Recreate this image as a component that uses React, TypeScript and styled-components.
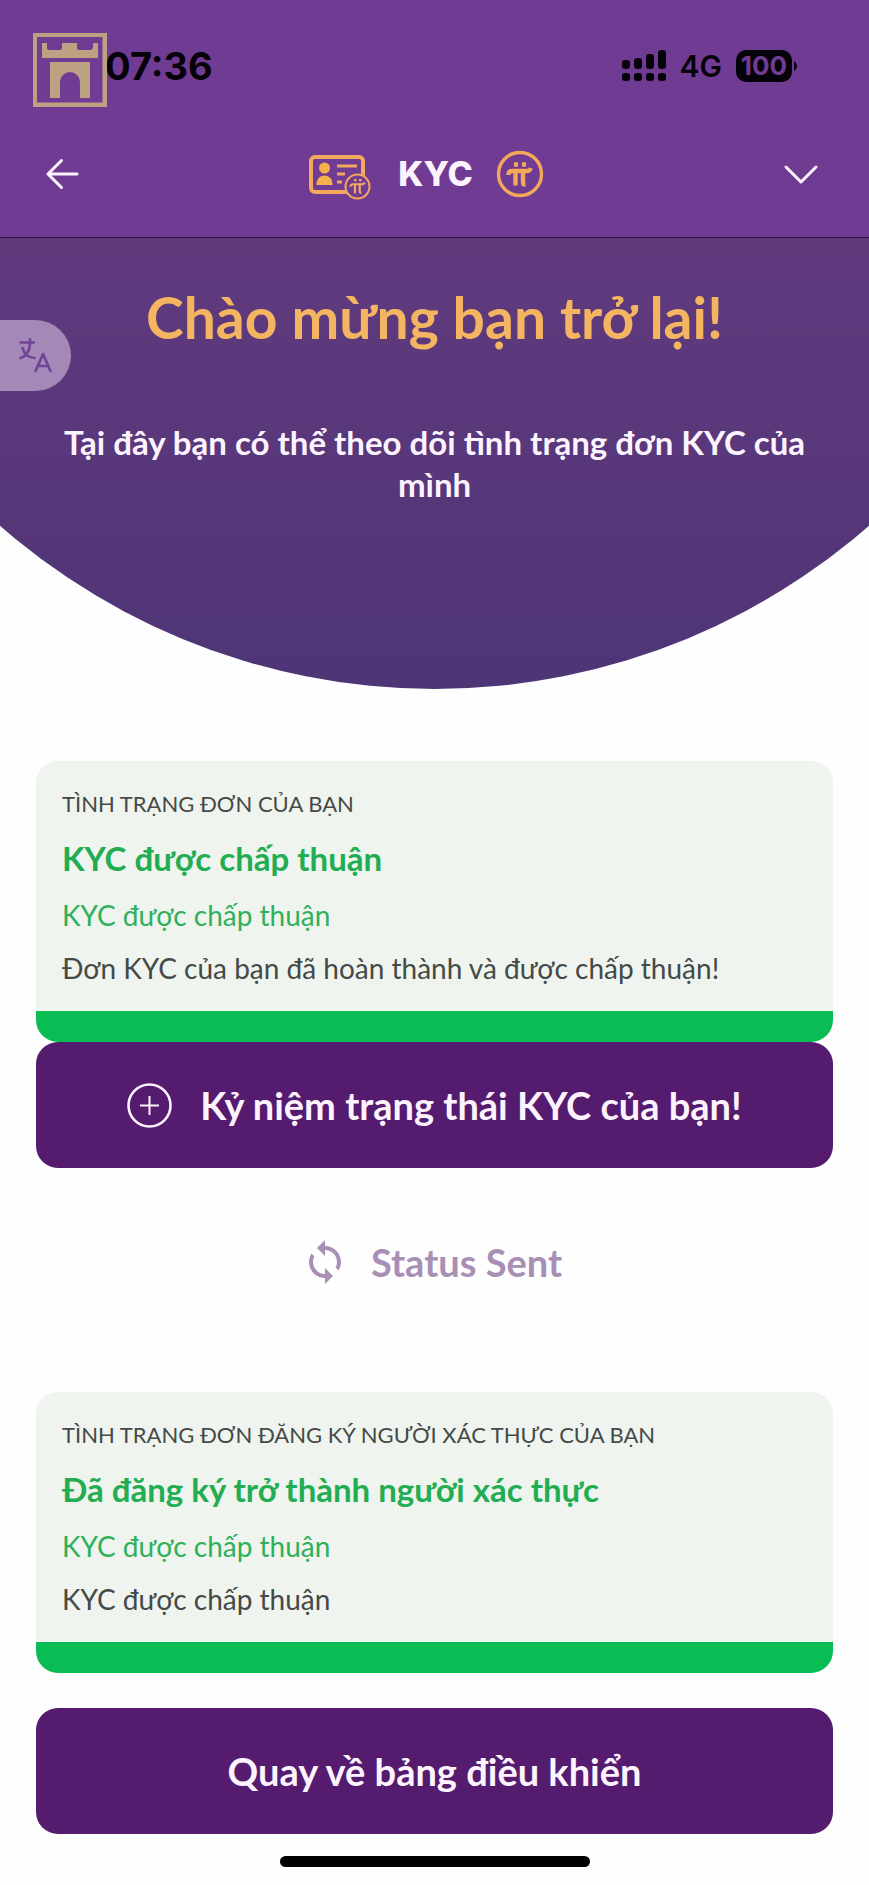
import React from 'react';
import styled, { createGlobalStyle } from 'styled-components';

const GlobalStyle = createGlobalStyle`
  *, *::before, *::after { box-sizing: border-box; }
  body {
    margin: 0;
    background: #fefefe;
    font-family: Lato, "Open Sans", sans-serif;
    color: #444a47;
  }
  h1, h2, p { margin: 0; }
  button { font: inherit; border: 0; cursor: pointer; }
  svg { display: block; flex: none; }
`;

const Page = styled.div`
  display: flex;
  flex-direction: column;
  min-height: 100vh;
`;

const Top = styled.header`
  background: #703b92;
  border-bottom: 1px solid #2b1240;
  font-family: Inter, sans-serif;
`;

const StatusBar = styled.div`
  display: flex;
  align-items: center;
  justify-content: space-between;
  height: 131px;
  padding: 0 72px 0 105px;
`;

const LogoBadge = styled.div`
  position: absolute;
  top: 33px;
  left: 33px;
`;

const StatusGroup = styled.div`
  display: flex;
  align-items: center;
  gap: 14px;
  color: #06020a;
`;

const Clock = styled.time`
  color: #06020a;
  font-size: 38px;
  line-height: 44px;
  font-weight: 700;
`;

const Network = styled.span`
  font-size: 30px;
  line-height: 36px;
  font-weight: 600;
`;

const Battery = styled.span`
  display: flex;
  align-items: center;
`;

const BatteryLevel = styled.span`
  width: 56px;
  border-radius: 10px;
  background: #06020a;
  color: #703b92;
  font-size: 26px;
  line-height: 32px;
  font-weight: 700;
  text-align: center;
`;

const NavBar = styled.nav`
  display: flex;
  align-items: center;
  justify-content: space-between;
  height: 106px;
  padding: 0 48px 20px 44px;
`;

const IconButton = styled.button`
  display: flex;
  padding: 0;
  background: none;
  color: #fdf3ff;
`;

const NavTitle = styled.div`
  display: flex;
  align-items: center;
  gap: 23px;
  margin-right: 12px;
  color: #fdf3ff;
  font-size: 34px;
  line-height: 44px;
  font-weight: 800;
`;

const Hero = styled.section`
  display: flex;
  flex-direction: column;
  align-items: center;
  gap: 70px;
  padding: 45px 48px 184px;
  background: linear-gradient(#613a7e, #4e3576);
  clip-path: ellipse(76% 661px at 50% calc(100% - 661px));
  text-align: center;
`;

const Welcome = styled.h1`
  color: #f3b562;
  font-size: 57px;
  line-height: 68px;
  font-weight: 700;
`;

const Intro = styled.p`
  max-width: 760px;
  color: #fdf3ff;
  font-size: 33px;
  line-height: 42px;
  font-weight: 700;
`;

const TranslateTab = styled.button`
  position: absolute;
  top: 320px;
  left: 0;
  display: flex;
  align-items: center;
  width: 71px;
  height: 71px;
  padding: 0 0 0 18px;
  border-radius: 0 36px 36px 0;
  background: #a388b8;
  color: #714394;
`;

const Content = styled.main`
  display: flex;
  flex-direction: column;
  padding: 72px 36px 18px;
`;

const Card = styled.section`
  display: flex;
  flex-direction: column;
  padding: 24px 26px 16px;
  border-bottom: 31px solid #09bc54;
  border-radius: 22px;
  background: #eff4ee;
`;

const CardLabel = styled.p`
  font-size: 22px;
  line-height: 38px;
`;

const CardTitle = styled.h2`
  margin: 7px 0 3px;
  color: #22ad52;
  font-size: 33px;
  line-height: 56px;
  font-weight: 700;
`;

const CardText = styled.p<{ $accent?: boolean }>`
  color: ${(p) => (p.$accent ? '#2fb05b' : '#444a47')};
  font-size: 28px;
  line-height: 53px;
`;

const Button = styled.button`
  display: flex;
  align-items: center;
  justify-content: center;
  gap: 28px;
  min-height: 126px;
  border-radius: 22px;
  background: #541b6e;
  color: #fdf3ff;
  font-size: 38px;
  line-height: 44px;
  font-weight: 700;
`;

const SentStatus = styled.p`
  display: flex;
  align-items: center;
  justify-content: center;
  gap: 22px;
  height: 224px;
  padding: 0 6px 36px 0;
  color: #a88fb5;
  font-size: 38px;
  line-height: 44px;
  font-weight: 700;
`;

const Spacer = styled.div`
  height: 35px;
`;

const HomeBar = styled.div`
  align-self: center;
  width: 310px;
  max-width: 50%;
  height: 11px;
  margin: 4px 0 18px;
  border-radius: 6px;
  background: #000;
`;

const CastleLogo = () => (
  <svg width="74" height="74" viewBox="0 0 74 74" fill="#bda183">
    <path fillRule="evenodd" d="M0 0H74V74H0Z M4 4V69.500H69.500V4Z" />
    <path d="M9 10H14V15Q14 17 16 17H27Q29 17 29 15V10H44V15Q44 17 46 17H57Q60 17 60 14V10H65V25H9Z" />
    <path d="M17 29H57V65H47V49A10 10 0 0 0 27 49V65H17Z" />
  </svg>
);

const SignalIcon = () => (
  <svg width="44" height="32" viewBox="0 0 44 32" fill="currentColor">
    {[10, 8, 4, 0].map((y, i) => (
      <React.Fragment key={y}>
        <rect x={i * 12} y={y} width="8" height={19 - y} rx="3" />
        <rect x={i * 12} y="23" width="8" height="8" rx="3" />
      </React.Fragment>
    ))}
  </svg>
);

const PiMark = () => (
  <>
    <path d="M-11 .500C-11 -3 -9.500 -3.500 -7 -3.500H7C9.500 -3.500 10.500 -4 11 -6.500" />
    <path d="M-4 -3.500V11M3.500 -3.500V8Q3.500 10 6 10" />
    <path d="M-5.500 -10H-1.500M2.500 -10H6.500" />
  </>
);

const IdCardIcon = () => (
  <svg width="66" height="54" viewBox="0 -8 66 54" fill="none" stroke="#f2a95c">
    <rect x="2" y="2" width="52" height="35" rx="4" strokeWidth="4" />
    <g fill="#f6b04b" stroke="none">
      <circle cx="15.500" cy="13" r="5.500" />
      <path d="M7.500 30V28.500A8 8 0 0 1 23.500 28.500V30Z" />
    </g>
    <path d="M28 11H48M28 19H36M28 27H33" strokeWidth="3" />
    <circle cx="48.500" cy="31.500" r="12" fill="#703b92" strokeWidth="2" />
    <g transform="translate(48.500 31.500) scale(.64)" strokeWidth="3.400">
      <PiMark />
    </g>
  </svg>
);

const PiIcon = () => (
  <svg width="48" height="48" viewBox="0 0 48 48" fill="none" stroke="#f3a95a">
    <circle cx="24" cy="24" r="21.500" strokeWidth="3.400" />
    <g transform="translate(23.500 24.500)" strokeWidth="4.400">
      <PiMark />
    </g>
  </svg>
);

const BackIcon = () => (
  <svg width="38" height="38" viewBox="0 0 38 38" fill="none" stroke="currentColor" strokeWidth="3" strokeLinecap="round" strokeLinejoin="round">
    <path d="M33 19H4M17.500 5.500L4 19L17.500 32.500" />
  </svg>
);

const ChevronIcon = () => (
  <svg width="38" height="38" viewBox="0 0 38 38" fill="none" stroke="currentColor" strokeWidth="3" strokeLinecap="round" strokeLinejoin="round">
    <path d="M3 12L18 27L33 12" />
  </svg>
);

const TranslateIcon = () => (
  <svg width="36" height="36" viewBox="0 0 36 36" fill="none" stroke="currentColor" strokeWidth="2.600" strokeLinecap="round" strokeLinejoin="round">
    <path d="M2.500 4.500H16M12 1V5C12 13 8 18 2.500 20M4.500 10C6 16 10 19.500 16.500 20" />
    <path d="M17.500 33L25 16L32.500 33M20 28H30" />
  </svg>
);

const PlusCircleIcon = () => (
  <svg width="45" height="45" viewBox="0 0 45 45" fill="none" stroke="currentColor">
    <circle cx="22.500" cy="22.500" r="21" strokeWidth="2.600" />
    <path d="M22.500 13V32M13 22.500H32" strokeWidth="2" />
  </svg>
);

const SyncIcon = () => (
  <svg width="48" height="48" viewBox="0 0 24 24" fill="currentColor">
    <path d="M12 4V1L8 5l4 4V6c3.310 0 6 2.690 6 6 0 1.010-.250 1.970-.700 2.800l1.460 1.460C19.540 15.030 20 13.570 20 12c0-4.420-3.580-8-8-8zm0 14c-3.310 0-6-2.690-6-6 0-1.010.250-1.970.700-2.800L5.240 7.740C4.460 8.970 4 10.430 4 12c0 4.420 3.580 8 8 8v3l4-4-4-4v3z" />
  </svg>
);

type StatusCardProps = { label: string; title: string; state: string; detail: string };

const StatusCard = ({ label, title, state, detail }: StatusCardProps) => (
  <Card>
    <CardLabel>{label}</CardLabel>
    <CardTitle>{title}</CardTitle>
    <CardText $accent>{state}</CardText>
    <CardText>{detail}</CardText>
  </Card>
);

export default function App() {
  return (
    <Page>
      <GlobalStyle />
      <Top>
        <StatusBar>
          <Clock>07:36</Clock>
          <StatusGroup>
            <SignalIcon />
            <Network>4G</Network>
            <Battery>
              <BatteryLevel>100</BatteryLevel>
              <svg width="5" height="10" viewBox="0 0 5 10" fill="currentColor">
                <path d="M2 0Q5 2 5 5T2 10Z" />
              </svg>
            </Battery>
          </StatusGroup>
        </StatusBar>
        <NavBar>
          <IconButton aria-label="Quay lại"><BackIcon /></IconButton>
          <NavTitle>
            <IdCardIcon />
            <span>KYC</span>
            <PiIcon />
          </NavTitle>
          <IconButton aria-label="Mở rộng"><ChevronIcon /></IconButton>
        </NavBar>
      </Top>
      <LogoBadge><CastleLogo /></LogoBadge>
      <Hero>
        <Welcome>Chào mừng bạn trở lại!</Welcome>
        <Intro>Tại đây bạn có thể theo dõi tình trạng đơn KYC của mình</Intro>
      </Hero>
      <TranslateTab aria-label="Dịch"><TranslateIcon /></TranslateTab>
      <Content>
        <StatusCard
          label="TÌNH TRẠNG ĐƠN CỦA BẠN"
          title="KYC được chấp thuận"
          state="KYC được chấp thuận"
          detail="Đơn KYC của bạn đã hoàn thành và được chấp thuận!"
        />
        <Button>
          <PlusCircleIcon />
          <span>Kỷ niệm trạng thái KYC của bạn!</span>
        </Button>
        <SentStatus>
          <SyncIcon />
          <span>Status Sent</span>
        </SentStatus>
        <StatusCard
          label="TÌNH TRẠNG ĐƠN ĐĂNG KÝ NGƯỜI XÁC THỰC CỦA BẠN"
          title="Đã đăng ký trở thành người xác thực"
          state="KYC được chấp thuận"
          detail="KYC được chấp thuận"
        />
        <Spacer />
        <Button>Quay về bảng điều khiển</Button>
      </Content>
      <HomeBar />
    </Page>
  );
}
